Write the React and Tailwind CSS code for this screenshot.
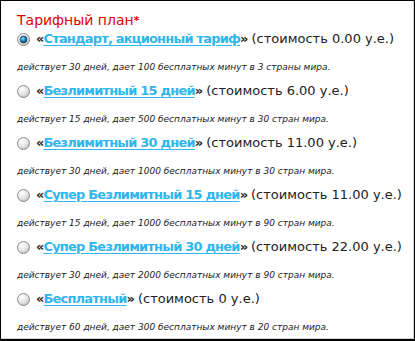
import React from "react";

const items = [
  { name: "Стандарт, акционный тариф", price: "0.00", desc: "действует 30 дней, дает 100 бесплатных минут в 3 страны мира.", checked: true },
  { name: "Безлимитный 15 дней", price: "6.00", desc: "действует 15 дней, дает 500 бесплатных минут в 30 стран мира." },
  { name: "Безлимитный 30 дней", price: "11.00", desc: "действует 30 дней, дает 1000 бесплатных минут в 30 стран мира." },
  { name: "Супер Безлимитный 15 дней", price: "11.00", desc: "действует 15 дней, дает 1000 бесплатных минут в 90 стран мира." },
  { name: "Супер Безлимитный 30 дней", price: "22.00", desc: "действует 30 дней, дает 2000 бесплатных минут в 90 стран мира." },
  { name: "Бесплатный", price: "0", desc: "действует 60 дней, дает 300 бесплатных минут в 20 стран мира." },
];

function Radio({ checked }) {
  return (
    <svg width="13" height="13" viewBox="0 0 13 13" className="shrink-0">
      <defs>
        <radialGradient id="rg" cx="0.35" cy="0.3" r="0.8">
          <stop offset="0" stopColor="#ffffff" />
          <stop offset="0.6" stopColor="#e2e2e2" />
          <stop offset="1" stopColor="#b8b8b8" />
        </radialGradient>
        <radialGradient id="dot" cx="0.4" cy="0.35" r="0.7">
          <stop offset="0" stopColor="#8fe0ff" />
          <stop offset="0.5" stopColor="#1a8fd0" />
          <stop offset="1" stopColor="#0a3a66" />
        </radialGradient>
      </defs>
      <circle cx="6.5" cy="6.5" r="6" fill="url(#rg)" stroke="#8c8c8c" strokeWidth="1" />
      {checked && <circle cx="6.5" cy="6.5" r="3.4" fill="url(#dot)" stroke="#1c2f44" strokeWidth="0.8" />}
    </svg>
  );
}

export default function App() {
  return (
    <div
      className="w-[415px] h-[341px] bg-white border-t border-l border-r border-b-2 border-black shadow-[inset_-1px_-1px_0_#d6d6d6] pl-[16px] pt-[11px] text-[#222]"
      style={{ fontFamily: '"DejaVu Sans", Verdana, sans-serif' }}
    >
      <div className="h-[16px] leading-[16px] text-[14px] text-[#e00000]">
        Тарифный план<sup className="font-bold text-[11px] relative top-[-1px]">*</sup>
      </div>
      <div className="mt-[2px] flex flex-col gap-[9px]">
        {items.map((it, i) => (
          <div key={i} className="flex flex-col">
            <div className="h-[18px] flex items-center text-[13px] leading-[18px] whitespace-nowrap">
              <Radio checked={it.checked} />
              <span className="ml-[6px] font-bold tracking-[-1px]">«</span>
              <span className="font-bold text-[#2fb6ee] underline underline-offset-2 tracking-[-0.8px]">{it.name}</span>
              <span className="font-bold tracking-[-1px]">»</span>
              <span className="ml-[4px]">(стоимость {it.price} у.е.)</span>
            </div>
            <div className="mt-[13px] h-[12px] leading-[12px] text-[9px] italic whitespace-nowrap text-[#222]">
              {it.desc}
            </div>
          </div>
        ))}
      </div>
    </div>
  );
}
